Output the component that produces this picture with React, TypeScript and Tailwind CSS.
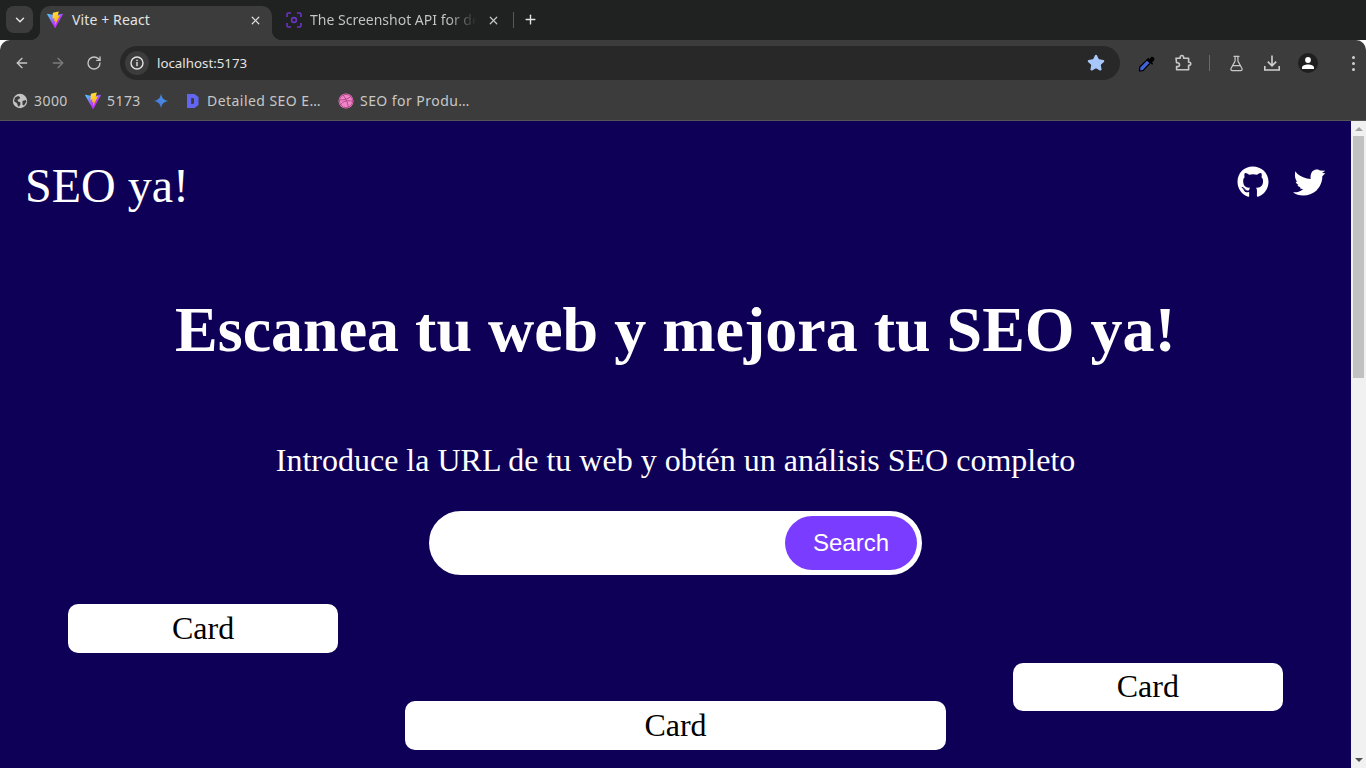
import { ArrowLeft, ArrowRight, ChevronDown, FlaskConical, Plus, RotateCw, Star, X } from "lucide-react";
import { FaGithub } from "react-icons/fa";

function ViteIcon() {
  return (
    <svg width="18" height="18" viewBox="0 0 32 32" className="-mx-px shrink-0">
      <defs>
        <linearGradient id="viteA" x1="0" y1="0" x2="1" y2="1">
          <stop offset="0" stopColor="#41D1FF" />
          <stop offset="0.6" stopColor="#BD34FE" />
        </linearGradient>
        <linearGradient id="viteB" x1="0.3" y1="0" x2="0.6" y2="1">
          <stop offset="0" stopColor="#FFEA83" />
          <stop offset="0.1" stopColor="#FFDD35" />
          <stop offset="1" stopColor="#FFA800" />
        </linearGradient>
      </defs>
      <path
        fill="url(#viteA)"
        d="M29.8836 6.146 16.7418 29.6457c-.2713.4851-.9684.488-1.2439.0052L2.0956 6.1482c-.3-.5262.1498-1.1635.746-1.057l13.156 2.3516a.7144.7144 0 0 0 .2537-.0004l12.8808-2.3478c.5942-.1083 1.0463.5241.7515 1.0513Z"
      />
      <path
        fill="url(#viteB)"
        d="M22.2644 1.0783 12.5 2.9915a.3586.3586 0 0 0-.2889.3306l-.6007 10.1452c-.0141.2389.2053.4243.4386.3705l2.7186-.6273c.2544-.0587.4842.1653.4319.4212l-.8077 3.9551c-.0544.2662.1955.4938.4555.4148l1.6792-.5102c.2603-.0791.5104.1491.4555.4155l-1.2836 6.2129c-.0803.3886.4366.6005.6522.2673l.144-.2225 7.9562-15.8779c.1332-.2658-.0965-.5689-.3885-.5125l-2.7982.54c-.2629.0507-.4866-.1941-.4124-.4502l1.8263-6.3306c.0743-.2565-.1501-.5015-.4131-.4499Z"
      />
    </svg>
  );
}

function ShotIcon() {
  return (
    <svg width="16" height="16" viewBox="0 0 16 16" fill="none" stroke="#6b34c9" strokeWidth="1.6" className="shrink-0">
      <path d="M1 5V2.500A1.500 1.500 0 0 1 2.500 1H5M11 1h2.500A1.500 1.500 0 0 1 15 2.500V5M15 11v2.500a1.500 1.500 0 0 1-1.500 1.500H11M5 15H2.500A1.500 1.500 0 0 1 1 13.500V11" />
      <circle cx="8" cy="8" r="2.400" />
    </svg>
  );
}

function InfoIcon() {
  return (
    <svg width="14" height="14" viewBox="0 0 14 14" fill="none">
      <circle cx="7" cy="7" r="6" stroke="#e3e3e3" strokeWidth="1.4" />
      <rect x="6.3" y="6" width="1.4" height="4.2" fill="#e3e3e3" />
      <rect x="6.3" y="3.7" width="1.4" height="1.4" fill="#e3e3e3" />
    </svg>
  );
}

function Eyedropper() {
  return (
    <svg width="18" height="18" viewBox="0 0 18 18" className="shrink-0">
      <path d="M1.500 17 1.800 13 9 5.800l3.200 3.200L5 16.600Z" fill="#3f63d8" stroke="#000" strokeWidth="1.2" strokeLinejoin="round" />
      <path d="M8.500 5.200 10 6.700l1.500-1.500 1-1.500a2.200 2.200 0 0 1 3.300 3.100l-1.800 1.800 1.200 1.200-1 1-5.700-5.600Z" fill="#000" />
      <path d="M10.200 3.800 14.200 7.800 12.800 9.200 8.800 5.200Z" fill="#000" />
    </svg>
  );
}

function Puzzle() {
  return (
    <svg width="18" height="18" viewBox="0 0 18 18" fill="none" stroke="#c7c7c7" strokeWidth="1.6" strokeLinejoin="round" className="shrink-0">
      <path d="M2 4.200h4.200V3.200a1.700 1.700 0 0 1 3.400 0v1h5v4h.6a1.600 1.600 0 0 1 0 3.200h-.6v4.400H2.600v-3.200h1a1.900 1.900 0 0 0 0-3.800h-1Z" />
    </svg>
  );
}

function DownloadIcon() {
  return (
    <svg width="16" height="16" viewBox="0 0 16 16" fill="none" stroke="#d0d0d0" strokeWidth="1.6" className="shrink-0">
      <path d="M8 0.500v10M3.800 6.600 8 10.800l4.200-4.200M0.800 11v4h14.400v-4" />
    </svg>
  );
}

function Profile() {
  return (
    <div className="flex h-5 w-5 items-center justify-center rounded-full bg-[#1f1f1f]">
      <svg width="14" height="14" viewBox="0 0 14 14" fill="#fff">
        <circle cx="7" cy="4" r="2.900" />
        <path d="M1 13v-1.400C1 9.600 4 8.400 7 8.400s6 1.200 6 3.200V13Z" />
      </svg>
    </div>
  );
}

function Dots() {
  return (
    <div className="flex flex-col gap-[3px]">
      <div className="h-[3px] w-[3px] rounded-full bg-[#d0d0d0]" />
      <div className="h-[3px] w-[3px] rounded-full bg-[#d0d0d0]" />
      <div className="h-[3px] w-[3px] rounded-full bg-[#d0d0d0]" />
    </div>
  );
}

function GlobeIcon() {
  return (
    <svg width="16" height="16" viewBox="0 0 16 16" className="shrink-0">
      <circle cx="8" cy="8" r="7.200" fill="#c4c4c4" />
      <path d="M3 4.500 6 3l2 1-.5 2-2 .8.6 1.800 2 .4.4 2-1.200 2.500-1.300-.3-1-3L2 8.200Z" fill="#3c3c3c" />
      <path d="M10.500 8l3-1 1 1.500-2.500 4-1.500-.7Z" fill="#3c3c3c" />
    </svg>
  );
}

function GeminiIcon() {
  return (
    <svg width="16" height="16" viewBox="0 0 16 16" className="shrink-0">
      <defs>
        <linearGradient id="gem" x1="0" y1="1" x2="1" y2="0">
          <stop offset="0" stopColor="#4f6fd8" />
          <stop offset="1" stopColor="#3f9bea" />
        </linearGradient>
      </defs>
      <path d="M8 0.500C8.500 5 11 7.500 15.500 8 11 8.500 8.500 11 8 15.500 7.500 11 5 8.500 0.500 8 5 7.500 7.500 5 8 0.500Z" fill="url(#gem)" />
    </svg>
  );
}

function DocIcon() {
  return (
    <svg width="14" height="16" viewBox="0 0 14 16" className="shrink-0">
      <path fillRule="evenodd" d="M1 1H8.500l4 3v8l-4 3H1ZM5.200 5v6h1.600L8 10.200V5.800L6.800 5Z" fill="#6366f1" />
    </svg>
  );
}

function DribbbleIcon() {
  return (
    <svg width="16" height="16" viewBox="0 0 16 16" fill="none" className="shrink-0">
      <circle cx="8" cy="8" r="7.500" fill="#ee85c6" />
      <g stroke="#a83a80" strokeWidth="0.8">
        <circle cx="8" cy="8" r="6.600" />
        <path d="M5 2c2.500 3 4.500 7 5.500 12.500M1.500 7c4.500 0 9-1 11.500-3.800M2.500 12c2-3.500 6-5.200 11.800-3.800" />
      </g>
    </svg>
  );
}

// jagged old-style bird, the fa one is too smooth
function TwitterBird() {
  return (
    <svg width="33" height="29" viewBox="0 0 33 29" fill="#fff" className="shrink-0">
      <path d="M17.700 11C17 6 19 1.700 23.500 1.400c1.500-.1 2.700.4 3.600 1.200l5.200.1-3.300 2.300 3.300.3-3 3c.2 5-2 10.500-6 14.400C19.500 25.800 15 27.500 10.500 27.600 6.500 27.700 2.800 26.500 0 24.300c2 .2 4-.1 5.700-.6 1.800-.6 3.400-1.500 4.600-2.700-1.500 0-2.800-.5-3.600-1.100l1-.4c-1.300-.3-2.700-1.200-3.300-2.200l1.200-.2C4 16 3 15 2.700 13.700l1.700.1C2.500 12.500 1.300 8 2.300 3.300l2 2.500c3.500 2.900 8 5 13.400 5.200Z" />
    </svg>
  );
}

function Bookmark({ icon, label, width }: { icon: React.ReactNode; label: string; width: string }) {
  return (
    <div className={`flex shrink-0 items-center ${width}`}>
      {icon}
      <span className="-mt-px text-[14px] tracking-[0.45px] whitespace-nowrap text-[#c7c7c7]">{label}</span>
    </div>
  );
}

function TabStrip() {
  return (
    <div className="flex h-10 items-end bg-[#202221] pl-1.5">
      <div className="mb-[7px] flex h-[27px] w-[27px] items-center justify-center rounded-lg bg-[#3c3c3c]">
        <ChevronDown size={14} strokeWidth={2.5} color="#e3e3e3" />
      </div>
      {/* active tab */}
      <div className="relative ml-[7px] flex h-[34px] w-[232px] items-center rounded-t-[10px] bg-[#3c3c3c] pr-2 pb-[6px] pl-[7px]">
        <div className="absolute -left-2.5 bottom-0 h-2.5 w-2.5 bg-[radial-gradient(circle_at_0_0,#202221_10px,#3c3c3c_10.500px)]" />
        <div className="absolute -right-2.5 bottom-0 h-2.5 w-2.5 bg-[radial-gradient(circle_at_100%_0,#202221_10px,#3c3c3c_10.500px)]" />
        <ViteIcon />
        <span className="-mt-px ml-[9px] text-[14px] tracking-[0.12px] whitespace-nowrap text-[#e3e3e3]">Vite + React</span>
        <X size={13} strokeWidth={2.2} color="#e3e3e3" className="mr-[2px] ml-auto" />
      </div>
      {/* inactive tab */}
      <div className="ml-[14px] flex h-[34px] items-center pb-[6px]">
        <ShotIcon />
        <span className="-mt-px ml-2 w-[168px] overflow-hidden bg-[linear-gradient(90deg,#c7c7c7_82%,#202221_99%)] bg-clip-text text-[14px] whitespace-nowrap text-transparent">
          The Screenshot API for developers
        </span>
        <X size={13} strokeWidth={2.2} color="#c7c7c7" className="ml-[9px]" />
        <div className="ml-[13px] h-4 w-px bg-[#5a5a5a]" />
      </div>
      <div className="mb-[13px] ml-[9px]">
        <Plus size={15} strokeWidth={2.2} color="#e3e3e3" />
      </div>
    </div>
  );
}

function Toolbar() {
  return (
    <div className="flex h-11 items-center rounded-t-[10px] bg-[#3c3c3c] pt-[2px] pl-3.5">
      <ArrowLeft size={16} strokeWidth={2} color="#c7c7c7" />
      <ArrowRight size={16} strokeWidth={2} color="#7c7c7c" className="ml-5" />
      <RotateCw size={16} strokeWidth={2} color="#c7c7c7" className="ml-5" />
      <div className="ml-[18px] flex h-[34px] w-[1000px] items-center rounded-full bg-[#282828] pr-[15px] pl-[5px]">
        <div className="flex h-6 w-6 items-center justify-center rounded-full bg-[#3c3c3c]">
          <InfoIcon />
        </div>
        <span className="mt-px ml-2 text-[13.3px] text-[#e3e3e3]">localhost:5173</span>
        <Star size={18} fill="#a8c7fa" color="#a8c7fa" className="ml-auto" />
      </div>
      <div className="ml-[18px] flex items-center">
        <Eyedropper />
        <div className="ml-[18px]">
          <Puzzle />
        </div>
        <div className="ml-[17px] h-4 w-px bg-[#6a6a6a]" />
        <FlaskConical size={17} strokeWidth={1.7} color="#c7c7c7" className="ml-[18px]" />
        <div className="ml-[19px]">
          <DownloadIcon />
        </div>
        <div className="ml-[18px]">
          <Profile />
        </div>
        <div className="ml-[34px]">
          <Dots />
        </div>
      </div>
    </div>
  );
}

function BookmarksBar() {
  return (
    <div className="flex h-[37px] items-center border-b border-[#555] bg-[#3c3c3c] pb-[3px] pl-3">
      <Bookmark width="w-[73px] gap-[6px]" icon={<GlobeIcon />} label="3000" />
      <Bookmark width="w-[68px] gap-[6px]" icon={<ViteIcon />} label="5173" />
      <div className="w-[33px]">
        <GeminiIcon />
      </div>
      <Bookmark width="w-[152px] gap-[7px]" icon={<DocIcon />} label="Detailed SEO E…" />
      <Bookmark width="w-[140px] gap-[6px]" icon={<DribbbleIcon />} label="SEO for Produ…" />
    </div>
  );
}

function Scrollbar() {
  return (
    <div className="flex w-[15px] shrink-0 flex-col items-center bg-[#f1f1f1]">
      <div className="mt-[6px] h-0 w-0 border-x-[4px] border-b-[4px] border-x-transparent border-b-[#a3a3a3]" />
      <div className="mt-[5px] h-[242px] w-[11px] bg-[#c1c1c1]" />
      <div className="mt-auto mb-[6px] h-0 w-0 border-x-[4px] border-t-[4px] border-x-transparent border-t-[#505050]" />
    </div>
  );
}

function Card({ className }: { className: string }) {
  return (
    <div className={`flex items-center justify-center rounded-[10px] bg-white pb-[2px] text-[32px] text-black ${className}`}>
      Card
    </div>
  );
}

export default function App() {
  return (
    <div className="flex h-screen flex-col overflow-hidden font-['Noto_Sans',sans-serif]">
      <TabStrip />
      <Toolbar />
      <BookmarksBar />
      <div className="flex min-h-0 flex-1">
        <main className="min-w-0 flex-1 overflow-hidden bg-[#0f0057] font-['Liberation_Serif',serif] text-white">
          <header className="flex items-start justify-between pt-[30px] pr-[25px] pl-[25px]">
            <div className="text-[48px] leading-[70px]">SEO ya!</div>
            <div className="flex items-center gap-[24px] pt-[15px]">
              <FaGithub size={32} />
              <TwitterBird />
            </div>
          </header>
          <h1 className="mt-[72px] text-center text-[64px] leading-[74px] font-bold">
            Escanea tu web y mejora tu SEO ya!
          </h1>
          <p className="mt-[75px] text-center text-[32px] leading-[37px]">
            Introduce la URL de tu web y obtén un análisis SEO completo
          </p>
          <form className="mx-auto mt-[32px] flex h-16 w-[493px] justify-end rounded-full border-[5px] border-white bg-white">
            <div className="flex w-[132px] items-center justify-center rounded-full bg-[#7a3cff] font-['Liberation_Sans',sans-serif] text-2xl text-white">
              Search
            </div>
          </form>
          <div className="mt-[29px] grid grid-cols-[1fr_2fr_1fr] items-start gap-x-[67px] px-[68px]">
            <Card className="h-[49px]" />
            <Card className="mt-[97px] h-[49px]" />
            <Card className="mt-[59px] h-[48px]" />
          </div>
        </main>
        <Scrollbar />
      </div>
    </div>
  );
}
